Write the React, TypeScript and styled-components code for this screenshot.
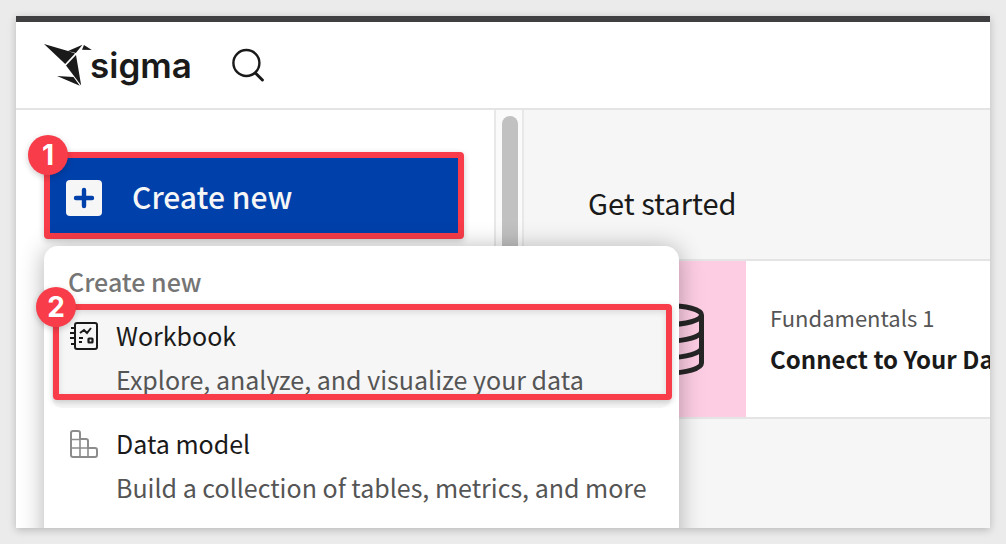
import React from "react";
import styled, { createGlobalStyle } from "styled-components";

const GlobalStyle = createGlobalStyle`
  * { box-sizing: border-box; }
  body {
    margin: 0;
    background: #ebebeb;
    color: #1a1a1a;
    font-family: "Noto Sans CJK SC", "Open Sans", sans-serif;
  }
  h2, h3, p { margin: 0; font-weight: 400; }
  button { font-family: inherit; border: 0; padding: 0; background: none; color: inherit; text-align: left; }
`;

const Page = styled.div`
  height: 100vh;
  padding: 16px;
`;

const FrameShadow = styled.div`
  height: 100%;
  box-shadow: 0 2px 8px rgba(0, 0, 0, 0.22);
`;

const Frame = styled.div`
  position: relative;
  display: flex;
  flex-direction: column;
  height: 100%;
  overflow: hidden;
  border-top: 6px solid #3f3e40;
  background: #fff;
`;

const Header = styled.header`
  display: flex;
  flex: none;
  align-items: center;
  gap: 40px;
  height: 88px;
  padding: 0 28px;
  border-bottom: 2px solid #e4e4e4;
`;

const Logo = styled.a`
  display: flex;
  align-items: center;
  color: #1a1a1a;
  font: 600 35px/40px Inter, sans-serif;
  text-decoration: none;
`;

const SearchButton = styled.button`
  display: flex;
`;

const Body = styled.div`
  display: flex;
  flex: 1;
  min-height: 0;
`;

const Sidebar = styled.aside`
  flex: none;
  width: 480px;
  padding: 42px 30px 0 28px;
  border-right: 2px solid #e8e8e8;
`;

const CreateWrap = styled.div`
  position: relative;
`;

const CreateButton = styled.button`
  display: flex;
  align-items: center;
  gap: 30px;
  width: 100%;
  height: 87px;
  padding: 4px 16px 0;
  border: 6px solid #f83c49;
  border-radius: 4px;
  background: #0040aa;
  box-shadow: 0 2px 6px rgba(0, 0, 0, 0.2);
  color: #f6f6f6;
  font-size: 30px;
  font-weight: 500;
  line-height: 40px;
`;

const CreateLabel = styled.span`
  padding-bottom: 4px;
`;

const Badge = styled.span`
  position: absolute;
  top: -17px;
  left: -16px;
  display: flex;
  align-items: center;
  justify-content: center;
  width: 40px;
  height: 40px;
  border-radius: 50%;
  background: #f83c49;
  box-shadow: 0 2px 6px rgba(0, 0, 0, 0.2);
  color: #fff;
  font: 700 28px/40px Inter, sans-serif;
`;

const Menu = styled.div`
  position: absolute;
  top: 94px;
  left: 0;
  z-index: 2;
  width: 635px;
  padding: 15px 8px 40px;
  border-radius: 14px;
  background: #fff;
  box-shadow: 0 2px 24px rgba(0, 0, 0, 0.3);
`;

const MenuTitle = styled.h2`
  padding: 0 16px 3px;
  color: #757575;
  font-size: 25px;
  font-weight: 500;
  line-height: 40px;
`;

const MenuRow = styled.div`
  position: relative;
  margin-bottom: 4px;
`;

const MenuItem = styled.button<{ $active?: boolean }>`
  display: flex;
  gap: 16px;
  width: 100%;
  height: 104px;
  padding: 11px 16px;
  border-radius: 10px;
  background: ${(p) => (p.$active ? "#f6f6f6" : "#fff")};
  svg { flex: none; margin-top: 5px; }
`;

const ItemText = styled.span`
  display: flex;
  flex-direction: column;
  gap: 4px;
  font-size: 25px;
  line-height: 40px;
  white-space: nowrap;
`;

const ItemDetail = styled.span`
  color: #555;
`;

const Callout = styled.div`
  position: absolute;
  inset: 0 -1px 8px 1px;
  border: 6px solid #f83c49;
  border-radius: 4px;
  box-shadow: 0 2px 6px rgba(0, 0, 0, 0.2), inset 0 2px 6px rgba(0, 0, 0, 0.12);
  pointer-events: none;
`;

const ScrollTrack = styled.div`
  flex: none;
  width: 28px;
  padding: 6px 4px 0 6px;
  border-right: 2px solid #e8e8e8;
  background: #fafafa;
`;

const ScrollThumb = styled.div`
  width: 16px;
  height: 100%;
  border-radius: 8px;
  background: #c1c1c1;
`;

const Main = styled.main`
  flex: 1;
  min-width: 0;
  padding: 72px 0 0 64px;
  background: #f6f6f6;
`;

const SectionTitle = styled.h2`
  padding-bottom: 37px;
  font-size: 29px;
  line-height: 40px;
`;

const Card = styled.article`
  display: flex;
  height: 160px;
  border: solid #e4e4e4;
  border-width: 2px 0;
  background: #fff;
`;

const CardArt = styled.div`
  display: flex;
  flex: none;
  align-items: center;
  justify-content: center;
  width: 158px;
  background: #fdcde4;
`;

const CardText = styled.div`
  padding: 36px 24px;
  white-space: nowrap;
`;

const CardKicker = styled.p`
  padding-bottom: 2px;
  color: #555;
  font-size: 22px;
  line-height: 40px;
`;

const CardTitle = styled.h3`
  font-size: 24px;
  font-weight: 700;
  line-height: 40px;
`;

const HummingbirdIcon = () => (
  <svg width="46" height="44" viewBox="0 0 46 44" overflow="visible" fill="#1a1a1a" aria-hidden="true">
    <path d="M0 1 24 8 31 10.600 21.200 21ZM32 12 37.200 42.600 22 22.400ZM24 8 38.500 1.800 31.800 10ZM40 2 47.800 7 38 6.800ZM13 33 29.500 34 35.800 42.800Z" />
  </svg>
);

const SearchIcon = () => (
  <svg width="34" height="34" viewBox="0 0 34 34" fill="none" stroke="#1a1a1a" strokeWidth="2.4" strokeLinecap="round" aria-hidden="true">
    <circle cx="14.400" cy="15" r="13" />
    <path d="m23.400 25 7 7" strokeWidth="3" />
  </svg>
);

const PlusIcon = () => (
  <svg width="36" height="36" viewBox="0 0 36 36" aria-hidden="true">
    <rect width="36" height="36" rx="4" fill="#f6f6f6" />
    <path d="M18 10v16M10 18h16" stroke="#0040aa" strokeWidth="4.4" strokeLinecap="round" />
  </svg>
);

const WorkbookIcon = () => (
  <svg width="32" height="32" viewBox="0 0 32 32" fill="none" stroke="#1a1a1a" strokeWidth="2" aria-hidden="true">
    <rect x="7" y="3" width="22" height="26" rx="2" />
    <path d="M3 8h4M2 13h5M2 18h5M3 24h4M12 13l4-3 3 3 4-5M11 18h4M11 22h3" />
    <rect x="20.5" y="18.5" width="4" height="4" rx="0.5" strokeWidth="2.2" />
  </svg>
);

const DataModelIcon = () => (
  <svg width="32" height="32" viewBox="0 0 32 32" fill="none" stroke="#8c8c8c" strokeWidth="2" aria-hidden="true">
    <path d="M5 3h5a2 2 0 0 1 2 2v6h6a2 2 0 0 1 2 2v7h7a2 2 0 0 1 2 2v5a2 2 0 0 1-2 2H5a2 2 0 0 1-2-2V5a2 2 0 0 1 2-2Z" />
    <path d="M3 11.5h9V29M3 20h17v9" strokeWidth="1.6" />
  </svg>
);

const DatabaseIcon = () => (
  <svg width="74" height="74" viewBox="0 0 74 74" fill="none" stroke="#262626" strokeWidth="5" aria-hidden="true">
    <ellipse cx="37" cy="13" rx="34.5" ry="9.5" />
    <path d="M2.5 13v48c0 5.5 15 10 34.5 10s34.5-4.500 34.500-10V13M2.500 29c0 5.500 15 10 34.500 10s34.500-4.500 34.500-10M2.500 45.500c0 5.500 15 10 34.500 10s34.500-4.500 34.500-10" />
  </svg>
);

export default function App() {
  return (
    <Page>
      <GlobalStyle />
      <FrameShadow>
        <Frame>
          <Header>
            <Logo href="#"><HummingbirdIcon />sigma</Logo>
            <SearchButton aria-label="Search"><SearchIcon /></SearchButton>
          </Header>
          <Body>
            <Sidebar>
              <CreateWrap>
                <CreateButton><PlusIcon /><CreateLabel>Create new</CreateLabel></CreateButton>
                <Badge>1</Badge>
                <Menu>
                  <MenuTitle>Create new</MenuTitle>
                  <MenuRow>
                    <MenuItem $active>
                      <WorkbookIcon />
                      <ItemText>
                        <span>Workbook</span>
                        <ItemDetail>Explore, analyze, and visualize your data</ItemDetail>
                      </ItemText>
                    </MenuItem>
                    <Callout />
                    <Badge>2</Badge>
                  </MenuRow>
                  <MenuRow>
                    <MenuItem>
                      <DataModelIcon />
                      <ItemText>
                        <span>Data model</span>
                        <ItemDetail>Build a collection of tables, metrics, and more</ItemDetail>
                      </ItemText>
                    </MenuItem>
                  </MenuRow>
                </Menu>
              </CreateWrap>
            </Sidebar>
            <ScrollTrack><ScrollThumb /></ScrollTrack>
            <Main>
              <SectionTitle>Get started</SectionTitle>
              <Card>
                <CardArt><DatabaseIcon /></CardArt>
                <CardText>
                  <CardKicker>Fundamentals 1</CardKicker>
                  <CardTitle>Connect to Your Data</CardTitle>
                </CardText>
              </Card>
            </Main>
          </Body>
        </Frame>
      </FrameShadow>
    </Page>
  );
}
